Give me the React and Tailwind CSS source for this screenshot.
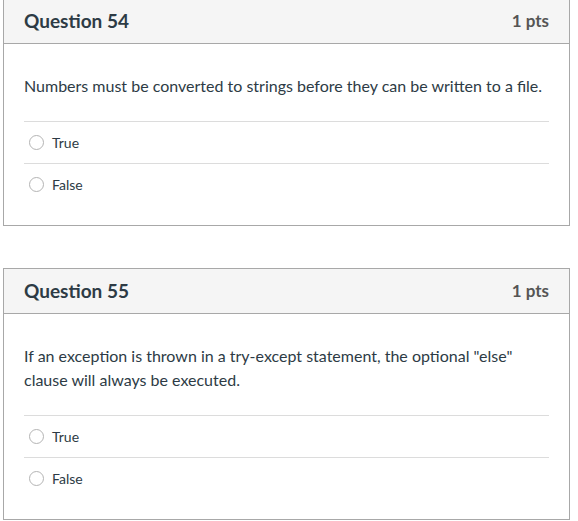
const questions = [
  {
    number: 54,
    points: '1 pts',
    text: 'Numbers must be converted to strings before they can be written to a file.',
    answers: ['True', 'False'],
  },
  {
    number: 55,
    points: '1 pts',
    text: 'If an exception is thrown in a try-except statement, the optional "else" clause will always be executed.',
    answers: ['True', 'False'],
  },
]

function Answer({ label }) {
  return (
    <label className="flex items-center h-[42px] border-t border-[#dcdcdc] pl-[5px] cursor-pointer">
      <span className="w-[15px] h-[15px] rounded-full border border-[#b4b4b4] bg-white flex-shrink-0" />
      <span className="ml-[8px] text-[14px] text-[#2d3b45]">{label}</span>
    </label>
  )
}

function QuestionCard({ q }) {
  return (
    <div className="border border-[#a8a8a8] bg-white">
      {/* Header */}
      <div className="h-[45px] bg-[#f5f5f5] border-b border-[#a8a8a8] flex items-center justify-between pl-[20px] pr-[20px]">
        <h2 className="text-[19px] font-bold text-[#2d3b45]">Question {q.number}</h2>
        <span className="text-[17px] font-bold text-[#555555]">{q.points}</span>
      </div>

      {/* Body */}
      <div className="pt-[30px] pb-[20px] pl-[20px] pr-[20px]">
        <p className="text-[16px] leading-[24px] text-[#2d3b45]">{q.text}</p>
        <div className="mt-[23px]">
          {q.answers.map((a) => (
            <Answer key={a} label={a} />
          ))}
        </div>
      </div>
    </div>
  )
}

export default function App() {
  return (
    <div className="bg-white min-h-screen" style={{ fontFamily: 'Lato, "Noto Sans", sans-serif' }}>
      <div className="pl-[3px] w-[570px] -mt-[2px] flex flex-col gap-[42px]">
        {questions.map((q) => (
          <QuestionCard key={q.number} q={q} />
        ))}
      </div>
    </div>
  )
}
